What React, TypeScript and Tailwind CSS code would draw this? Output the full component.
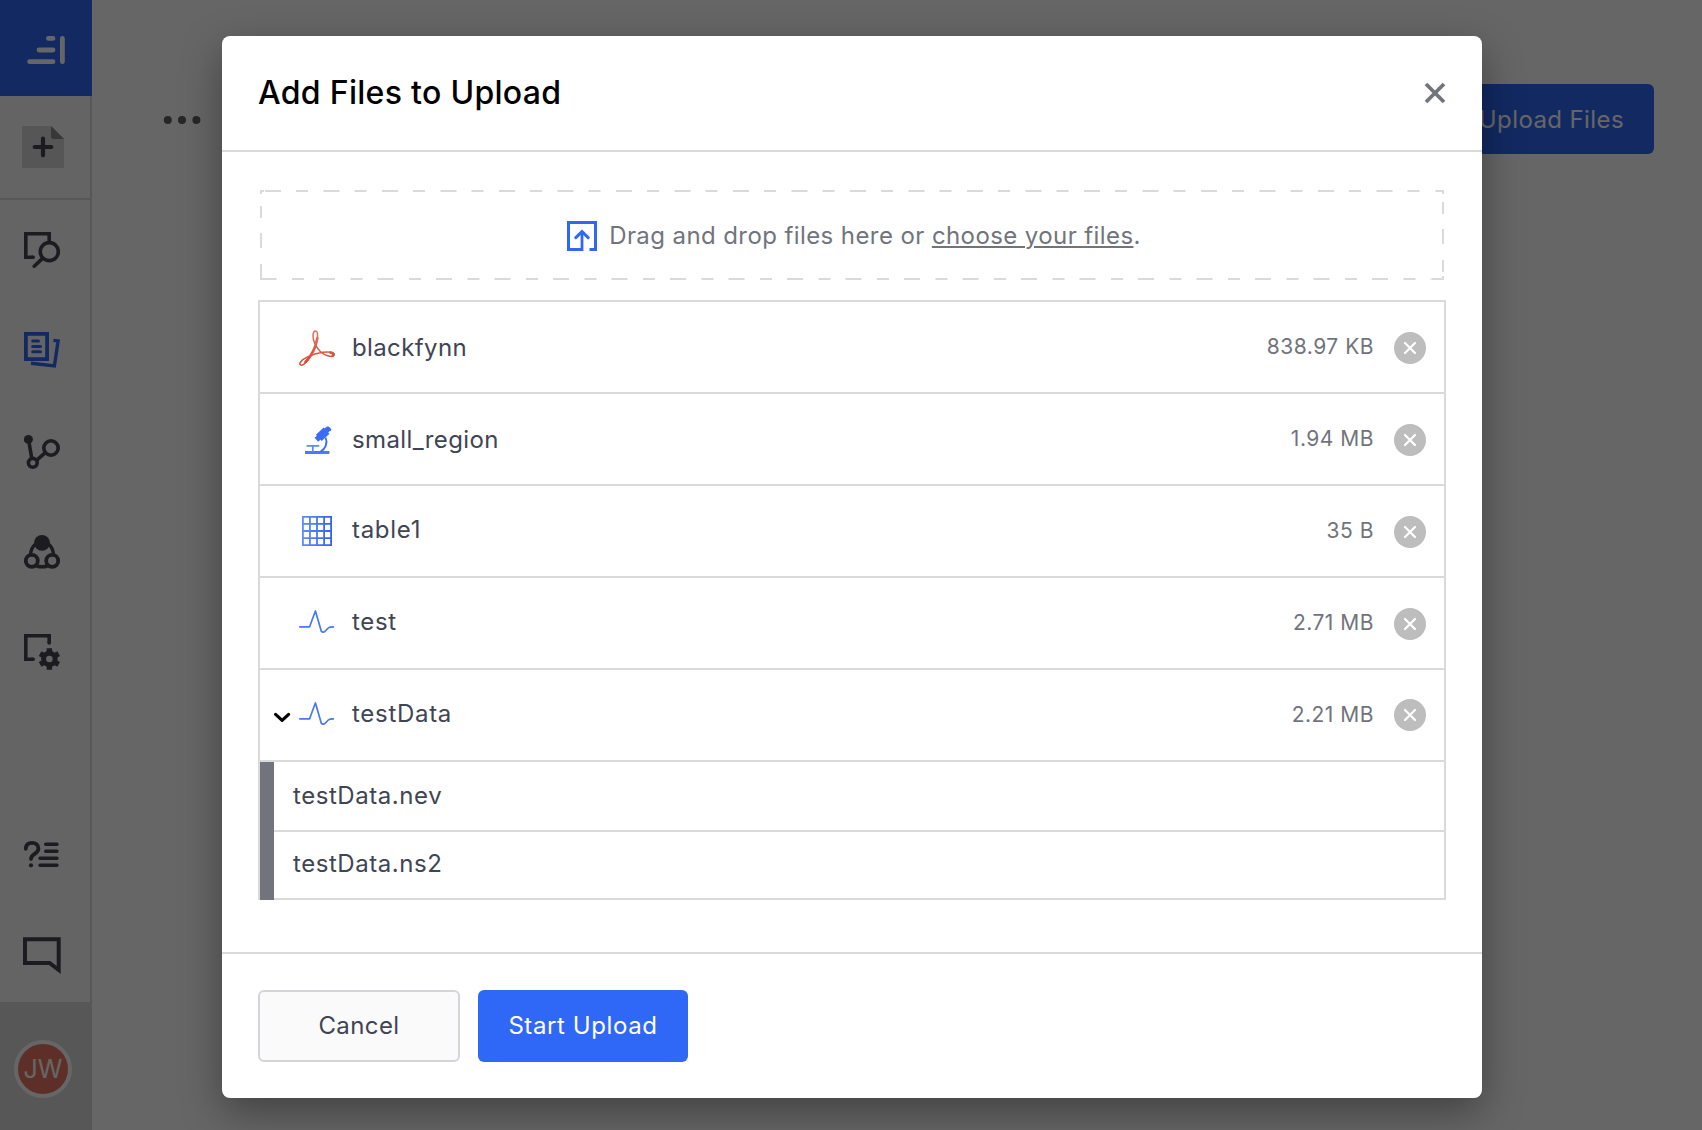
import { ReactNode } from "react";

type FileRow = {
  name: string;
  size: string;
  icon: ReactNode;
  nameClass: string;
  expanded?: boolean;
};

const PdfIcon = () => (
  <svg width="36" height="36" viewBox="0 0 36 36" fill="none" stroke="url(#pdf)" strokeLinejoin="round">
    <defs>
      <linearGradient id="pdf" x1="0" y1="0" x2="0" y2="36" gradientUnits="userSpaceOnUse">
        <stop offset="0" stopColor="#e5735f" />
        <stop offset="1" stopColor="#d8452c" />
      </linearGradient>
    </defs>
    <path
      strokeWidth="1.5"
      d="M16.7 1C13.2 1.2 13.4 8 15.6 13C18 18.6 23 24.4 29.5 26.1C34.5 27.3 36.4 24.8 34.4 23.2C30.5 20.4 18 22.4 8.5 26.9C2.2 30 -.2 33.4 1.3 34.7C4 37 10.5 29 14.5 21C18.7 12.5 20 1 16.7 1Z"
    />
    <path strokeWidth="2.6" strokeLinecap="round" d="M18.4 8C17.5 12.5 16.5 16.5 14.3 20.8C12 25.5 9 29.5 6.5 32M31.5 22.6C34 23 35 24 34 25.5" />
  </svg>
);

const MicroscopeIcon = () => (
  <svg className="ml-[3px]" width="28" height="28" viewBox="0 0 28 28" fill="none" stroke="#3a6cf4">
    <path strokeWidth="3" stroke="#4a7bf6" d="M0 26.5H24.4" />
    <path strokeWidth="1.7" stroke="#5f8bf8" d="M1.6 19.8H14.3M7.8 20V25.5" />
    <path strokeWidth="1.8" d="M20.6 11.5C23 17 20.4 23 15.6 25.6" />
    <path strokeWidth="8.6" d="M13.8 11.8L21.6 4.6" />
    <path strokeWidth="5.4" d="M11.4 13.8L14.5 11M20.8 5L24 2.2" />
    <path strokeWidth="2.6" strokeLinecap="round" d="M23.3 1.8L25 3.6" />
  </svg>
);

const TableIcon = () => (
  <svg className="-mt-0.5" width="30" height="30" viewBox="0 0 30 30" fill="none" stroke="url(#tbl)" strokeWidth="1.8">
    <defs>
      <linearGradient id="tbl" x1="0" y1="15" x2="30" y2="15" gradientUnits="userSpaceOnUse">
        <stop offset="0" stopColor="#618cf8" />
        <stop offset="1" stopColor="#2f62ee" />
      </linearGradient>
    </defs>
    <path d="M.9 .9H29.1V29.1H.9ZM7.9 0V30M15 0V30M22.1 0V30M0 7.9H30M0 15H30M0 22.1H30" />
  </svg>
);

const WaveIcon = () => (
  <svg className="-mt-1" width="36" height="24" viewBox="0 0 36 24" fill="none" stroke="#4478f5" strokeWidth="1.7" strokeLinecap="round" strokeLinejoin="round">
    <path d="M.8 16.8H10.6L16.4 1L22.4 21.4C23.6 22.6 25.3 22.2 26.4 21L29.3 18C30.6 16.8 31 16.8 34.4 16.8" />
  </svg>
);

const files: FileRow[] = [
  { name: "blackfynn", size: "838.97 KB", icon: <PdfIcon />, nameClass: "pt-0.5 tracking-[0.38px]" },
  { name: "small_region", size: "1.94 MB", icon: <MicroscopeIcon />, nameClass: "pt-0.5 tracking-[0.38px]" },
  { name: "table1", size: "35 B", icon: <TableIcon />, nameClass: "pb-0.5 tracking-[0.7px]" },
  { name: "test", size: "2.71 MB", icon: <WaveIcon />, nameClass: "pb-0.5 tracking-[0.65px]" },
  { name: "testData", size: "2.21 MB", icon: <WaveIcon />, nameClass: "pb-0.5 tracking-[0.7px]", expanded: true },
];

const SearchIcon = () => (
  <svg width="36" height="36" viewBox="0 0 36 36" fill="none" stroke="currentColor" strokeWidth="3.6">
    <path d="M9 25.2H1.8V1.8H25.2V9.5" />
    <circle cx="25.3" cy="19.6" r="9" />
    <path strokeLinecap="round" d="M8.5 25.2H9.2M18.3 26.6L10.2 34.2" />
  </svg>
);

const FilesIcon = () => (
  <svg width="36" height="36" viewBox="0 0 36 36" fill="none" stroke="currentColor" strokeWidth="3.4">
    <path strokeWidth="3.8" d="M1.9 1.9H23.1V27.1H1.9Z" />
    <path strokeLinecap="round" strokeWidth="3" d="M8.7 9H14.5M8.7 14.4H16.5M8.7 19.7H16.5" />
    <path d="M29.4 8.4L34.1 8.9L30.4 33.9L7 31.3" />
  </svg>
);

const GraphIcon = () => (
  <svg width="36" height="36" viewBox="0 0 36 36" fill="none" stroke="currentColor" strokeWidth="3.6">
    <circle cx="4.4" cy="5.4" r="4.5" fill="currentColor" stroke="none" />
    <circle cx="8.8" cy="28.8" r="4.4" />
    <circle cx="27" cy="14" r="7.2" />
    <path d="M4.8 7L7.8 24.8M12.5 26.3L21.3 18.7" />
  </svg>
);

const TeamsIcon = () => (
  <svg width="36" height="36" viewBox="0 0 36 36" fill="none" stroke="currentColor" strokeWidth="3.8">
    <circle cx="18" cy="8.9" r="7.9" fill="currentColor" stroke="none" />
    <circle cx="7.8" cy="26.8" r="6" />
    <circle cx="28.2" cy="26.8" r="6" />
    <path strokeWidth="3.4" d="M11.8 9.8C8.5 12.5 6.8 16 6.6 20.5M24.2 9.8C27.5 12.5 29.2 16 29.4 20.5M12.5 32C16 33 20 33 23.5 32" />
  </svg>
);

const SettingsIcon = () => (
  <svg width="36" height="36" viewBox="0 0 36 36" fill="none" stroke="currentColor" strokeWidth="3.6">
    <path d="M9 25.2H1.8V1.8H25.2V9" />
    <path strokeLinecap="round" d="M8.5 25.2H9.2M25.2 8.5V9" />
    <circle cx="25.4" cy="25" r="5.8" strokeWidth="5" />
    <path strokeWidth="5.4" d="M25.4 14.3V18.5M25.4 31.5V35.7M16.1 19.6L19.8 21.7M31 28.3L34.7 30.4M16.1 30.4L19.8 28.3M31 21.7L34.7 19.6" />
  </svg>
);

const HelpIcon = () => (
  <svg width="36" height="36" viewBox="0 0 36 36" fill="none" stroke="currentColor" strokeWidth="3.4" strokeLinecap="round">
    <path strokeWidth="3.8" d="M1.7 12.8C2 8.6 4.6 6.8 8 6.8C12 6.8 14.4 9.4 14.4 12.4C14.4 18.2 7.2 17.6 7 23" />
    <path d="M21.7 8.3H33M21.7 15.3H33M16 22.3H33M16 29.3H33" />
    <circle cx="7" cy="29.3" r="2.1" fill="currentColor" stroke="none" />
  </svg>
);

const ChatIcon = () => (
  <svg width="38" height="38" viewBox="0 0 38 38" fill="none" stroke="currentColor" strokeWidth="4">
    <path d="M2 2.2H35.7V33L26.6 26H2Z" />
  </svg>
);

const CircleX = () => (
  <svg width="32" height="32" viewBox="0 0 32 32" fill="none">
    <circle cx="16" cy="16" r="16" fill="#bdbdbd" />
    <path d="M11 11L21 21M21 11L11 21" stroke="#fff" strokeWidth="2.2" strokeLinecap="round" />
  </svg>
);

function Sidebar() {
  return (
    <aside className="flex h-full w-[92px] shrink-0 flex-col bg-[#fafafd] text-[#454552]">
      <div className="h-24 shrink-0 bg-[#2f67f6]">
        <svg width="92" height="96" viewBox="0 0 92 96" fill="none" stroke="#fff" strokeWidth="4.8" strokeLinecap="round">
          <path d="M48.4 38.4H53M39 50H53M29.6 61.7H53M62.4 38.4V61.7" />
        </svg>
      </div>
      <div className="flex flex-1 flex-col border-r-2 border-[#dadada]">
        <div className="h-[104px] border-b-2 border-[#dadada] pt-[30px] pl-[22px]">
          <svg width="42" height="42" viewBox="0 0 42 42">
            <path d="M0 0H29L42 13V42H0Z" fill="#d8d8d8" />
            <path d="M29 0L42 13H31.5Q29 13 29 10.5Z" fill="#8c8c8c" />
            <path d="M21 12.7V29.3M12.7 21H29.3" stroke="#454552" strokeWidth="4.2" strokeLinecap="round" />
          </svg>
        </div>
        <nav className="flex flex-col">
          <a className="flex h-[100px] items-center pl-6"><SearchIcon /></a>
          <a className="flex h-[100px] items-center pl-6 text-[#2f67f6]"><FilesIcon /></a>
          <a className="flex h-[100px] items-center pt-1 pl-6"><GraphIcon /></a>
          <a className="flex h-[100px] items-center pt-1 pl-6"><TeamsIcon /></a>
          <a className="flex h-[100px] items-center pt-1 pl-6"><SettingsIcon /></a>
        </nav>
        <div className="mt-auto flex flex-col">
          <a className="flex h-[100px] items-center pt-1 pl-6"><HelpIcon /></a>
          <a className="flex h-[100px] items-center pt-2 pl-[23px]"><ChatIcon /></a>
        </div>
      </div>
      <div className="h-32 shrink-0 bg-[#dadada] pt-[38px] pl-3.5">
        <div className="flex size-[58px] items-center justify-center rounded-full border-4 border-white bg-[#ec7664] pt-0.5 text-[25px] text-white">
          JW
        </div>
      </div>
    </aside>
  );
}

function DropZone() {
  return (
    <div className="relative mx-0.5 flex h-[90px] items-center justify-center pl-1">
      <svg className="absolute inset-0" width="1184" height="90" viewBox="0 0 1184 90" fill="none" stroke="#dadada" strokeWidth="2">
        <path d="M0 1H4M1 0V4M1183 0V4M1175.5 1H1184M1183 86V90M1171.5 89H1184" />
        <path strokeDasharray="16 15 12 15.5" d="M5 1H1174" />
        <path strokeDasharray="16 15.5 12 15" d="M.5 89H1171" />
        <path d="M1 16V28M1 43V58M1 74V90M1183 12V24M1183 39V54M1183 70V82" />
      </svg>
      <svg className="mt-0.5 mr-3" width="30" height="30" viewBox="0 0 30 30" fill="none" stroke="#2f67f6" strokeWidth="3">
        <path d="M15.5 28.5H1.5V1.5H28.5V28.5H22.5" />
        <path strokeWidth="2.8" d="M15 30V11" />
        <path strokeLinecap="round" d="M8.8 16.6L15 10.6L21.2 16.6" />
      </svg>
      <p className="pt-0.5 text-2xl tracking-[0.41px] text-[#71747c]">
        Drag and drop files here or <a className="underline decoration-2 underline-offset-2">choose your files</a>.
      </p>
    </div>
  );
}

function FileList() {
  return (
    <div className="mt-5 border-2 border-b-0 border-[#dadada] text-2xl text-[#404553]">
      {files.map((file) => (
        <div key={file.name} className="flex h-[92px] items-center border-b-2 border-[#dadada] pr-[18px]">
          <div className="flex w-[37px] justify-end pt-1 pr-[6px]">
            {file.expanded && (
              <svg width="18" height="12" viewBox="0 0 18 12" fill="none" stroke="#000" strokeWidth="3.2" strokeLinecap="round" strokeLinejoin="round">
                <path d="M2.6 3.4L9.1 9.4L15.6 3.4" />
              </svg>
            )}
          </div>
          <div className="flex w-10 justify-center pt-0.5">{file.icon}</div>
          <span className={`ml-[15px] ${file.nameClass}`}>{file.name}</span>
          <span className="mr-5 ml-auto text-[21px] tracking-[0.5px] text-[#71747c]">{file.size}</span>
          <div className={file.expanded ? "" : "pt-0.5"}>
            <CircleX />
          </div>
        </div>
      ))}
      <div className="border-l-[14px] border-[#71747c]">
        <div className="flex h-[70px] items-center border-b-2 border-[#dadada] pl-[19px] tracking-[0.56px]">testData.nev</div>
        <div className="flex h-[68px] items-center border-b-2 border-[#dadada] pb-0.5 pl-[19px] tracking-[0.56px]">testData.ns2</div>
      </div>
    </div>
  );
}

export default function App() {
  return (
    <div className="relative h-[1130px] w-[1702px] overflow-hidden bg-white font-['Inter',sans-serif]">
      <div className="flex h-full">
        <Sidebar />
        <main className="flex flex-1 items-start justify-between pt-[84px] pr-12 pl-[71px]">
          <svg className="mt-8" width="38" height="8" viewBox="0 0 38 8" fill="#606060">
            <circle cx="4.8" cy="4" r="4" />
            <circle cx="19" cy="4" r="4" />
            <circle cx="33.4" cy="4" r="4" />
          </svg>
          <button className="h-[70px] rounded-md bg-[#2f67f6] px-[30px] pt-0.5 text-2xl tracking-[0.4px] text-white">Upload Files</button>
        </main>
      </div>

      <div className="absolute inset-0 flex items-start bg-black/60 pt-9 pl-[222px]">
        <div className="flex h-[1062px] w-[1260px] flex-col rounded-lg bg-white shadow-[0_14px_40px_rgba(0,0,0,0.36)]">
          <header className="flex h-[116px] items-center justify-between border-b-2 border-[#dadada] px-9">
            <h2 className="text-[32px] font-medium tracking-[0.3px] text-black">Add Files to Upload</h2>
            <svg width="22" height="22" viewBox="0 0 22 22" stroke="#71747c" strokeWidth="3.8">
              <path d="M2 2L20 20M20 2L2 20" />
            </svg>
          </header>
          <section className="flex-1 px-9 pt-[38px]">
            <DropZone />
            <FileList />
          </section>
          <footer className="flex h-[146px] gap-[18px] border-t-2 border-[#dadada] px-9 pt-9 text-2xl">
            <button className="h-[72px] w-[202px] rounded-md border-2 border-[#d3d5db] bg-[#fafafa] tracking-[0.4px] text-[#404553]">Cancel</button>
            <button className="h-[72px] w-[210px] rounded-md bg-[#2f67f6] tracking-[0.6px] text-white">Start Upload</button>
          </footer>
        </div>
      </div>
    </div>
  );
}
